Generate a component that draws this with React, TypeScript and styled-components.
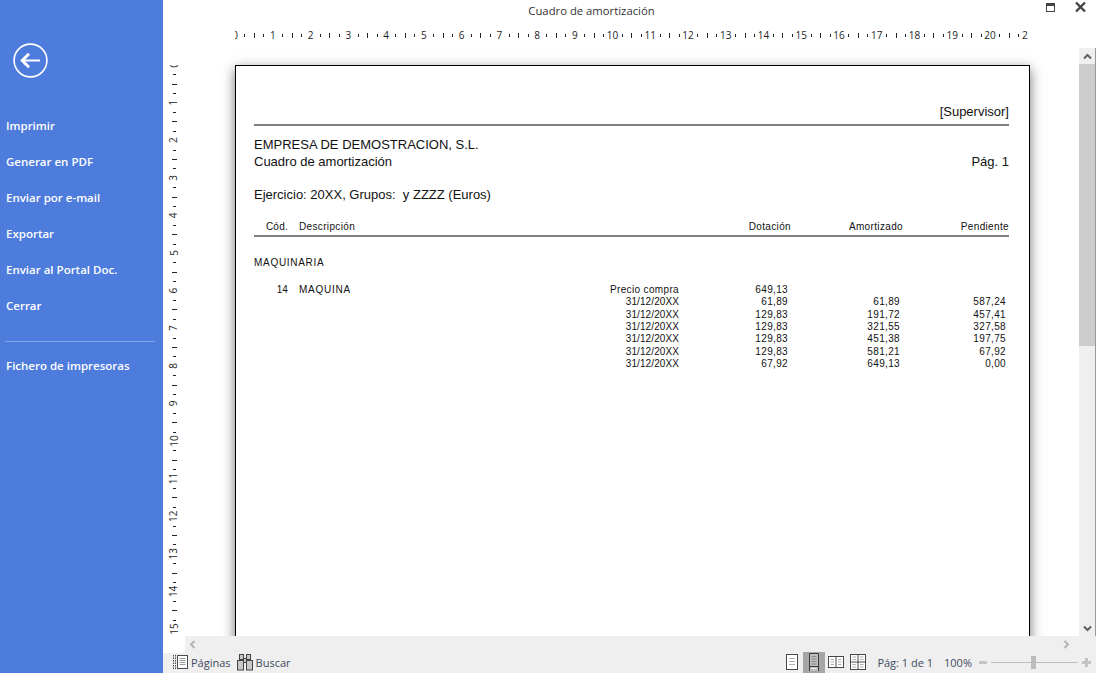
import React from 'react';
import styled, {createGlobalStyle} from 'styled-components';

const CM = 37.75;
const CM_V = 37.6;

const GlobalStyle = createGlobalStyle`
  html, body {
    margin: 0;
    padding: 0;
    overflow: hidden;
    background: #ffffff;
  }
  * {
    box-sizing: border-box;
  }
`;

const Frame = styled.div`
  display: flex;
  width: 1096px;
  height: 673px;
  overflow: hidden;
  font-family: "Liberation Sans", Arial, sans-serif;
`;

const Sidebar = styled.nav`
  display: flex;
  flex-direction: column;
  flex: 0 0 163px;
  padding: 43px 8px 0 6px;
  background: #4d7cdd;
  color: #ffffff;
`;

const BackButton = styled.div`
  width: 36px;
  height: 36px;
  margin: 0 0 29px 7px;
`;

const MenuItem = styled.div`
  height: 36px;
  font-family: "Open Sans", sans-serif;
  font-size: 11.5px;
  font-weight: 600;
  line-height: 36px;
  white-space: nowrap;
`;

const MenuDivider = styled.div`
  height: 1px;
  margin: 17px 0 6px -1px;
  background: #84a4e8;
`;

const Main = styled.div`
  display: flex;
  flex-direction: column;
  flex: 1;
  min-width: 0;
`;

const TitleBar = styled.header`
  position: relative;
  flex: 0 0 22px;
  padding-right: 76px;
  color: #333333;
  font-family: "Open Sans", sans-serif;
  font-size: 11.3px;
  line-height: 22px;
  text-align: center;
`;

const WindowControls = styled.div`
  position: absolute;
  top: 0;
  right: 9px;
  display: flex;
  gap: 18px;
`;

const RulerRow = styled.div`
  flex: 0 0 26px;
  height: 26px;
`;

const Body = styled.div`
  display: flex;
  flex: 1;
  min-height: 0;
`;

const SideRuler = styled.div`
  flex: 0 0 22px;
`;

const Viewport = styled.div`
  flex: 1;
  min-width: 0;
  padding: 17px 0 0 50px;
  overflow: hidden;
`;

const Page = styled.section`
  width: 795px;
  height: 800px;
  padding: 0 20px 0 18px;
  background: #ffffff;
  border: 1px solid #000000;
  box-shadow: 0 4px 12px rgba(0, 0, 0, 0.55);
  color: #111111;
`;

const Supervisor = styled.div`
  padding: 38px 0 5px;
  font-size: 13px;
  line-height: 15px;
  text-align: right;
`;

const Rule = styled.div`
  height: 2px;
  background: #808080;
`;

const Company = styled.div<{top: number}>`
  display: flex;
  justify-content: space-between;
  margin-top: ${p => p.top}px;
  font-size: 13px;
  line-height: 17px;
`;

const TableGrid = styled.div`
  display: grid;
  grid-template-columns: 34px 311px 80px 109px 112px 106px 3px;
  font-size: 10px;
  line-height: 12.35px;
  white-space: nowrap;
`;

const HeadRow = styled(TableGrid)`
  margin: 17px 0 1px;
  grid-template-columns: 34px 311px 80px 112px 112px 106px;
  line-height: 14px;
`;

const Cell = styled.div<{right?: boolean; indent?: number; spacing?: number}>`
  padding-left: ${p => p.indent || 0}px;
  letter-spacing: ${p => p.spacing ?? 0.35}px;
  text-align: ${p => (p.right ? 'right' : 'left')};
`;

const Section = styled.div`
  margin: 19px 0 14px;
  font-size: 10px;
  line-height: 14px;
  letter-spacing: 0.7px;
`;

const VScroll = styled.div`
  display: flex;
  flex-direction: column;
  align-items: stretch;
  flex: 0 0 17px;
  background: #efefef;
  border-right: 1px solid #999999;
`;

const ScrollArrow = styled.div`
  display: flex;
  align-items: center;
  justify-content: center;
  height: 16px;
`;

const Thumb = styled.div`
  height: 282px;
  background: #cdcdcd;
`;

const Spring = styled.div`
  flex: 1;
`;

const HScroll = styled.div`
  display: flex;
  align-items: center;
  justify-content: space-between;
  flex: 0 0 17px;
  margin-left: 22px;
  padding: 0 25px 0 3px;
  background: #efefef;
`;

const StatusBar = styled.footer`
  display: flex;
  align-items: center;
  flex: 0 0 20px;
  padding-left: 10px;
  background: #efefef;
  color: #3f4a5e;
  font-family: "Open Sans", sans-serif;
  font-size: 11px;
`;

const StatusTool = styled.div`
  display: flex;
  align-items: center;
  gap: 3px;
  margin-right: 6px;
  padding-bottom: 2px;
`;

const StatusRight = styled.div`
  display: flex;
  align-items: center;
  height: 100%;
  margin-left: auto;
  padding-right: 5px;
`;

const ViewButton = styled.div<{active?: boolean}>`
  display: flex;
  align-items: center;
  justify-content: center;
  width: 22px;
  height: 21px;
  margin-top: -1px;
  padding-bottom: 1px;
  background: ${p => (p.active ? '#a6a6a6' : 'transparent')};
`;

const PageInfo = styled.span`
  margin: 0 11px 2px 8px;
`;

const ZoomValue = styled.span`
  margin: 0 7px 2px 0;
`;

const ZoomMinus = styled.div`
  width: 8px;
  height: 3px;
  margin-bottom: 2px;
  background: #c4c4c4;
`;

const ZoomSlider = styled.div`
  position: relative;
  width: 87px;
  height: 1px;
  margin: 0 4px 2px;
  background: #bdbdbd;
`;

const ZoomHandle = styled.div`
  position: absolute;
  top: -6px;
  left: 40px;
  width: 5px;
  height: 13px;
  background: #bdbdbd;
`;

const ZoomPlus = styled.svg`
  margin-bottom: 2px;
`;

const TICK = '#222222';

function TopRuler() {
    const items: React.ReactNode[] = [];
    for (let cm = 0; cm <= 21; cm++) {
        const x = 72 + cm * CM;
        items.push(
            <text key={cm} x={x} y={17} fontSize="10" textAnchor="middle" fill="#1d1d1d" fontFamily="Open Sans, sans-serif">
                {cm}
            </text>
        );
        if (cm < 21) {
            [0.25, 0.5, 0.75].forEach(f => {
                const long = f === 0.5;
                items.push(
                    <rect key={`${cm}-${f}`} x={Math.round(x + f * CM)} y={long ? 11 : 12} width={1} height={long ? 5 : 3} fill={TICK}/>
                );
            });
        }
    }
    return (
        <svg width={870} height={26} viewBox="0 0 870 26" style={{display: 'block', overflow: 'hidden'}}>
            <defs>
                <clipPath id="top-ruler-clip">
                    <rect x={72} y={0} width={793} height={26}/>
                </clipPath>
            </defs>
            <g clipPath="url(#top-ruler-clip)">{items}</g>
        </svg>
    );
}

function LeftRuler() {
    const items: React.ReactNode[] = [];
    for (let cm = 0; cm <= 15; cm++) {
        const y = 17 + cm * CM_V;
        items.push(
            <text key={cm} x={11} y={y} fontSize="10" textAnchor="middle" fill="#1d1d1d" fontFamily="Open Sans, sans-serif"
                  transform={`rotate(-90 11 ${y}) translate(0 3.5)`}>
                {cm}
            </text>
        );
        [0.25, 0.5, 0.75].forEach(f => {
            const long = f === 0.5;
            items.push(
                <rect key={`${cm}-${f}`} x={long ? 9 : 10} y={Math.round(y + f * CM_V)} width={long ? 5 : 3} height={1} fill={TICK}/>
            );
        });
    }
    return (
        <svg width={22} height={588} viewBox="0 0 22 588" style={{display: 'block'}}>
            <defs>
                <clipPath id="left-ruler-clip">
                    <rect x={0} y={17} width={22} height={571}/>
                </clipPath>
            </defs>
            <g clipPath="url(#left-ruler-clip)">{items}</g>
        </svg>
    );
}

function BackIcon() {
    return (
        <svg width={36} height={36} viewBox="0 0 36 36" fill="none" stroke="#ffffff">
            <circle cx={17.5} cy={17.5} r={16.4} strokeWidth={1.6}/>
            <path d="M10 17.5H27" strokeWidth={2}/>
            <path d="M16 10.8L9.3 17.5L16 24.2" strokeWidth={3}/>
        </svg>
    );
}

function Chevron({dir}: {dir: 'up' | 'down' | 'left' | 'right'}) {
    const rotate = {up: 0, right: 90, down: 180, left: 270}[dir];
    return (
        <svg width={9} height={9} viewBox="0 0 9 9" fill="none" stroke={dir === 'up' || dir === 'down' ? '#606060' : '#b4b4b4'} strokeWidth={2}
             style={{transform: `rotate(${rotate}deg)`}}>
            <path d="M1 6.5L4.5 3L8 6.5"/>
        </svg>
    );
}

function PagesIcon() {
    return (
        <svg width={15} height={16} viewBox="0 0 15 16" fill="none" stroke="#4a4a4a">
            <path d="M0.5 1V15M2.5 1V15" strokeDasharray="1.5 1"/>
            <rect x={4.5} y={1.5} width={10} height={13} fill="#ffffff"/>
            <path d="M6.5 4.5H12.5M6.5 6.5H12.5M6.5 8.5H12.5M6.5 10.5H12.5" stroke="#9a9a9a"/>
        </svg>
    );
}

function BinocularsIcon() {
    return (
        <svg width={16} height={18} viewBox="0 0 16 18" fill="#c8c8c8" stroke="#444444">
            <rect x={2.5} y={1.5} width={4} height={5}/>
            <rect x={9.5} y={1.5} width={4} height={5}/>
            <rect x={0.5} y={7.5} width={6} height={9.5}/>
            <rect x={9.5} y={7.5} width={6} height={9.5}/>
            <rect x={6.5} y={5.5} width={3} height={4}/>
        </svg>
    );
}

function SinglePageIcon() {
    return (
        <svg width={12} height={16} viewBox="0 0 12 16" fill="#ffffff" stroke="#4a4a4a">
            <rect x={0.5} y={0.5} width={11} height={15}/>
            <path d="M3 4.5H9M3 7.5H9M3 10.5H9" stroke="#b0b0b0"/>
        </svg>
    );
}

function ContinuousIcon() {
    return (
        <svg width={10} height={18} viewBox="0 0 10 18" fill="#bdbdbd" stroke="#3c3c3c">
            <path d="M0.5 18V0.5H9.5V18"/>
            <path d="M0.5 13.5H9.5"/>
            <path d="M2.5 3.5H7.5M2.5 6H7.5M2.5 8.5H7.5M2.5 11H7.5" stroke="#8a8a8a"/>
            <path d="M2.5 15.5H7.5" stroke="#eeeeee"/>
        </svg>
    );
}

function FacingIcon() {
    return (
        <svg width={16} height={12} viewBox="0 0 16 12" fill="#ffffff" stroke="#4a4a4a">
            <rect x={0.5} y={0.5} width={15} height={11}/>
            <path d="M8 0.5V11.5"/>
            <path d="M2.5 3.5H6M2.5 6H6M2.5 8.5H6M10 3.5H13.5M10 6H13.5M10 8.5H13.5" stroke="#b0b0b0"/>
        </svg>
    );
}

function GridPagesIcon() {
    return (
        <svg width={16} height={16} viewBox="0 0 16 16" fill="#ffffff" stroke="#4a4a4a">
            <rect x={0.5} y={0.5} width={15} height={15}/>
            <path d="M8 0.5V15.5M0.5 8H15.5"/>
            <path d="M2.5 3H6M2.5 5.5H6M10 3H13.5M10 5.5H13.5M2.5 10.5H6M2.5 13H6M10 10.5H13.5M10 13H13.5" stroke="#b0b0b0"/>
        </svg>
    );
}

const menuItems = ['Imprimir', 'Generar en PDF', 'Enviar por e-mail', 'Exportar', 'Enviar al Portal Doc.', 'Cerrar'];

const rows = [
    ['31/12/20XX', '61,89', '61,89', '587,24'],
    ['31/12/20XX', '129,83', '191,72', '457,41'],
    ['31/12/20XX', '129,83', '321,55', '327,58'],
    ['31/12/20XX', '129,83', '451,38', '197,75'],
    ['31/12/20XX', '129,83', '581,21', '67,92'],
    ['31/12/20XX', '67,92', '649,13', '0,00'],
];

export default function App() {
    return (
        <Frame>
            <GlobalStyle/>
            <Sidebar>
                <BackButton><BackIcon/></BackButton>
                {menuItems.map(item => <MenuItem key={item}>{item}</MenuItem>)}
                <MenuDivider/>
                <MenuItem>Fichero de impresoras</MenuItem>
            </Sidebar>
            <Main>
                <TitleBar>
                    Cuadro de amortización
                    <WindowControls>
                        <svg width={12} height={22} viewBox="0 0 12 22" fill="none" stroke="#444444">
                            <rect x={1.5} y={3.5} width={8} height={8}/>
                            <path d="M1.5 4.5H9.5" strokeWidth={3}/>
                        </svg>
                        <svg width={12} height={22} viewBox="0 0 12 22" fill="none" stroke="#444444" strokeWidth={2.4}>
                            <path d="M1 2.5L10 11.5M10 2.5L1 11.5"/>
                        </svg>
                    </WindowControls>
                </TitleBar>
                <RulerRow><TopRuler/></RulerRow>
                <Body>
                    <SideRuler><LeftRuler/></SideRuler>
                    <Viewport>
                        <Page>
                            <Supervisor>[Supervisor]</Supervisor>
                            <Rule/>
                            <Company top={10}><span>EMPRESA DE DEMOSTRACION, S.L.</span></Company>
                            <Company top={0}><span>Cuadro de amortización</span><span>Pág. 1</span></Company>
                            <Company top={16}><span>Ejercicio: 20XX, Grupos:&nbsp; y ZZZZ (Euros)</span></Company>
                            <HeadRow>
                                <Cell right spacing={0.25}>Cód.</Cell>
                                <Cell indent={11}>Descripción</Cell>
                                <Cell/>
                                <Cell right>Dotación</Cell>
                                <Cell right>Amortizado</Cell>
                                <Cell right>Pendiente</Cell>
                            </HeadRow>
                            <Rule/>
                            <Section>MAQUINARIA</Section>
                            <TableGrid>
                                <Cell right spacing={0.1}>14</Cell>
                                <Cell indent={11} spacing={0.75}>MAQUINA</Cell>
                                <Cell right>Precio compra</Cell>
                                <Cell right>649,13</Cell>
                                <Cell/>
                                <Cell/>
                                <Cell/>
                            </TableGrid>
                            {rows.map((row, i) => (
                                <TableGrid key={i}>
                                    <Cell/>
                                    <Cell/>
                                    <Cell right spacing={0.1}>{row[0]}</Cell>
                                    <Cell right>{row[1]}</Cell>
                                    <Cell right>{row[2]}</Cell>
                                    <Cell right>{row[3]}</Cell>
                                    <Cell/>
                                </TableGrid>
                            ))}
                        </Page>
                    </Viewport>
                    <VScroll>
                        <ScrollArrow><Chevron dir="up"/></ScrollArrow>
                        <Thumb/>
                        <Spring/>
                        <ScrollArrow><Chevron dir="down"/></ScrollArrow>
                    </VScroll>
                </Body>
                <HScroll>
                    <Chevron dir="left"/>
                    <Chevron dir="right"/>
                </HScroll>
                <StatusBar>
                    <StatusTool><PagesIcon/>Páginas</StatusTool>
                    <StatusTool><BinocularsIcon/>Buscar</StatusTool>
                    <StatusRight>
                        <ViewButton><SinglePageIcon/></ViewButton>
                        <ViewButton active><ContinuousIcon/></ViewButton>
                        <ViewButton><FacingIcon/></ViewButton>
                        <ViewButton><GridPagesIcon/></ViewButton>
                        <PageInfo>Pág: 1 de 1</PageInfo>
                        <ZoomValue>100%</ZoomValue>
                        <ZoomMinus/>
                        <ZoomSlider><ZoomHandle/></ZoomSlider>
                        <ZoomPlus width={9} height={9} viewBox="0 0 9 9" fill="none" stroke="#c4c4c4" strokeWidth={3}>
                            <path d="M0 4.5H9M4.5 0V9"/>
                        </ZoomPlus>
                    </StatusRight>
                </StatusBar>
            </Main>
        </Frame>
    );
}
